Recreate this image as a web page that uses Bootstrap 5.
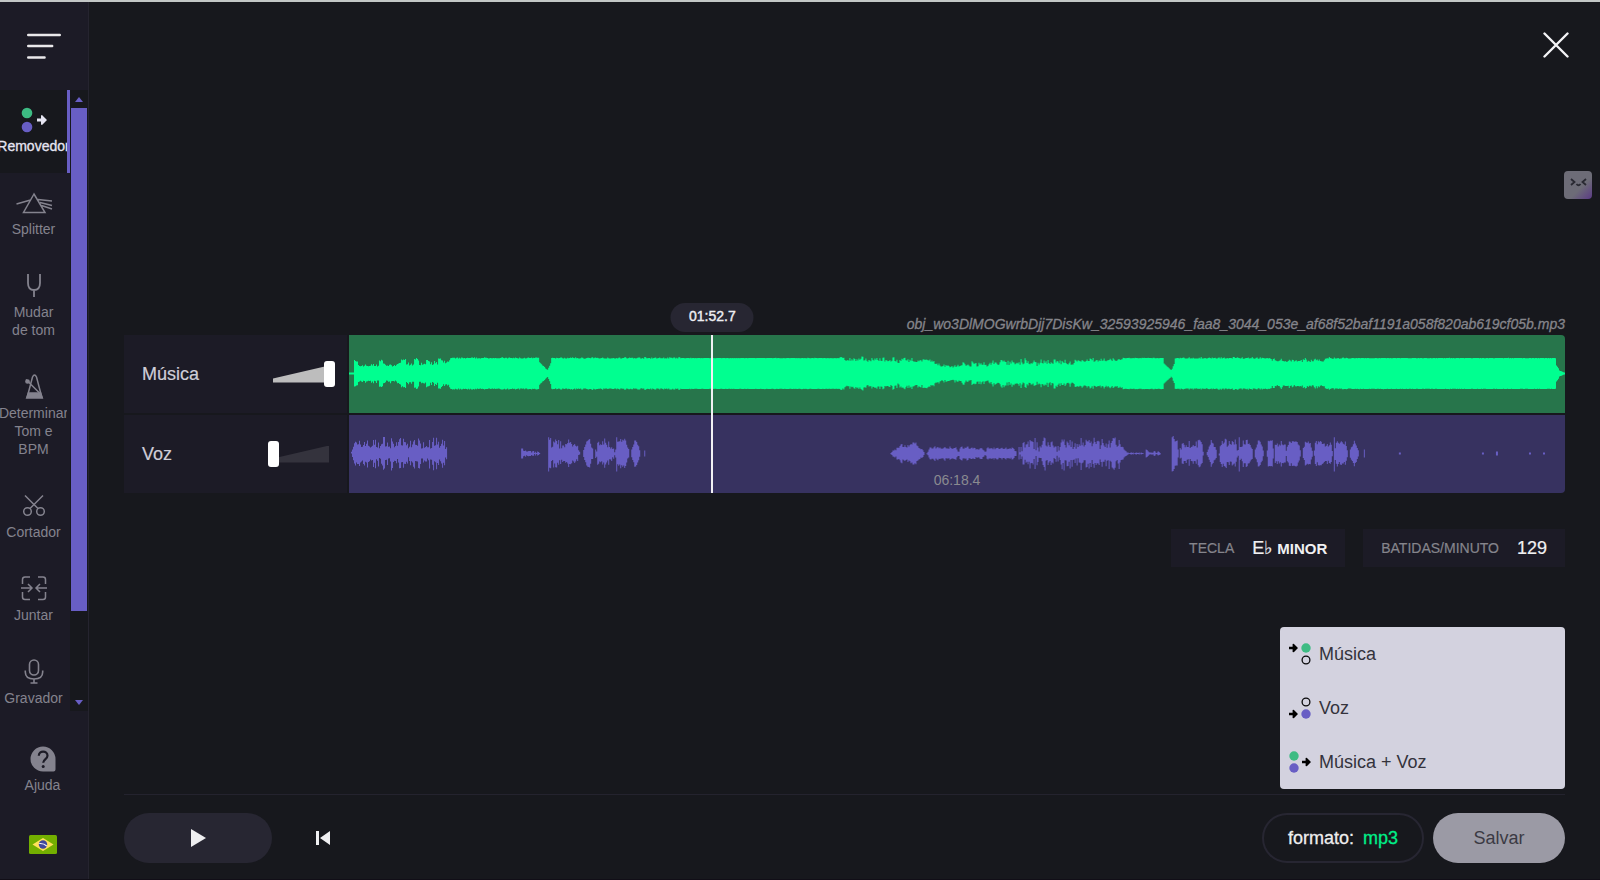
<!DOCTYPE html>
<html lang="pt-BR">
<head>
<meta charset="utf-8">
<meta name="viewport" content="width=device-width, initial-scale=1">
<title>Removedor</title>
<link href="https://cdn.jsdelivr.net/npm/bootstrap@5.3.0/dist/css/bootstrap.min.css" rel="stylesheet">
<style>
  :root { --page: #17181d; --panel: #1c1b26; --raised: #272632; --violet: #685ec4; --mint: #3dbb83; --muted: #84838e; }
  body { background: var(--page); color: #eeeef2; font-family: "Liberation Sans", Arial, sans-serif; font-size: 18px; line-height: 22px; border-top: 2px solid #c3c7c6; border-bottom: 1px solid #110e17; }
  a { text-decoration: none; }
  svg { display: block; }

  .app-shell { min-height: calc(100vh - 3px); }
  .sidebar { position: sticky; top: 0; width: 89px; height: calc(100vh - 3px); background: var(--panel); border-right: 1px solid #25242f; }
  .side-top { height: 88px; padding-left: 27px; }
  .side-list { min-height: 0; background: var(--page); }
  .side-items { width: 70px; background: var(--panel); overflow-x: hidden; overflow-y: auto; scrollbar-width: none; }
  .side-items::-webkit-scrollbar { display: none; }
  .side-item { color: var(--muted); font-size: 14px; line-height: 18px; padding: 17px 0 18px; gap: 4px; border-right: 3px solid transparent; overflow: hidden; text-align: center; }
  .side-item svg { height: 26px; }
  .side-item.active { background: var(--page); color: #e6e5f2; border-color: var(--violet); -webkit-text-stroke: .3px; }
  .side-item:hover, .side-help:hover { color: #e6e5f2; }
  .scroll-rail { padding: 0 1px; }
  .scroll-rail .arrow { height: 18px; }
  .scroll-thumb { height: 86%; background: var(--violet); }
  .side-bottom { height: 168px; padding-top: 35px; padding-right: 3px; padding-bottom: 25px; }
  .side-help { color: var(--muted); font-size: 14px; line-height: 18px; gap: 4px; }

  .workspace { min-width: 0; padding: 0 35px; }
  .top-row { height: 88px; padding-top: 30px; margin-right: -4px; }
  .mascot { right: 8px; top: 171px; width: 28px; height: 28px; border-radius: 4px; background: linear-gradient(135deg, #6d6c77 60%, #5b3a86); }
  .stage { padding-bottom: 14px; }

  .file-row { height: 32px; }
  .file-title { color: #85858b; font-size: 14px; line-height: 22px; font-style: italic; -webkit-text-stroke: .3px; }
  .lane-grid { display: grid; grid-template-columns: 223px minmax(0, 1fr); gap: 2px; }
  .lane-head { height: 78px; padding: 0 12px 0 18px; background: var(--panel); color: #cfced8; -webkit-text-stroke: .2px; }
  .lane-wave { height: 78px; }
  .lane-wave svg { width: 100%; height: 78px; }
  .lane-music { background: #27754b; border-top-right-radius: 4px; }
  .lane-voice { background: #373260; border-bottom-right-radius: 4px; }

  .volume { display: grid; width: 67px; }
  .volume::before { content: ""; grid-area: 1 / 1; align-self: center; width: 56px; height: 17px; margin-left: 5px; background: #bdbdbd; clip-path: polygon(0 76%, 100% 0, 100% 100%, 0 100%); }
  .volume.muted::before { background: #34333d; }
  .volume input { grid-area: 1 / 1; z-index: 1; width: 67px; height: 26px; margin: 0; background: none; -webkit-appearance: none; appearance: none; }
  .volume input::-webkit-slider-thumb { -webkit-appearance: none; width: 11px; height: 26px; border-radius: 3px; background: #fff; }
  .volume input::-moz-range-thumb { width: 11px; height: 26px; border: 0; border-radius: 3px; background: #fff; }

  .timeline { position: absolute; left: 225px; right: 0; top: 0; bottom: 0; pointer-events: none; }
  .playhead { position: absolute; top: 0; bottom: 0; width: 2px; background: #f1f1f4; }
  .time-pill { position: absolute; bottom: 100%; left: 50%; transform: translateX(-50%); margin-bottom: 3px; width: 83px; height: 29px; border-radius: 15px; background: var(--raised); font-size: 14px; line-height: 27px; text-align: center; -webkit-text-stroke: .4px; }
  .total-time { position: absolute; bottom: 4px; left: 50%; transform: translateX(-50%); color: #8a8a90; font-size: 14px; line-height: 18px; }

  .facts { gap: 18px; margin-top: 36px; }
  .fact { height: 38px; padding: 0 18px; gap: 18px; background: var(--panel); }
  .fact dt { color: #85858c; font-size: 14px; font-weight: 400; -webkit-text-stroke: .2px; }
  .fact dd { color: #f0f0f2; margin: 0; -webkit-text-stroke: .2px; }
  .fact .mode { font-size: 15px; font-weight: 700; -webkit-text-stroke: 0; }

  .player-bar { border-top: 1px solid #24232e; padding: 18px 0 16px; }
  .pill { height: 50px; border-radius: 25px; border: 2px solid transparent; padding: 0 24px; font-size: 18px; }
  .btn-play { width: 148px; background: var(--raised); }
  .btn-format { border-color: var(--raised); color: #eee; gap: 9px; margin-right: 9px; -webkit-text-stroke: .3px; }
  .btn-format span { color: #00ef88; }
  .btn-save, .btn-save:hover { width: 132px; background: #9b9aa5; color: #3b3a44; }
  .btn-prev { margin-left: 35px; width: 31px; height: 50px; }
  .export-menu { position: absolute; right: 0; bottom: 100%; margin-bottom: 6px; width: 285px; border-radius: 4px; background: #d3d2df; }
  .export-menu button { height: 54px; padding: 0 9px; gap: 8px; color: #34333c; border: 0; border-radius: 0; font-size: 18px; }
</style>
</head>
<body>
<svg class="d-none">
  <symbol id="arrow" viewBox="0 0 10 10"><path d="M0 3.600h4V0.500L5 0 10 5 5 10 4 9.500V6.400H0z" fill="currentColor"/></symbol>
</svg>
<div class="app-shell d-flex">
  <aside class="sidebar d-flex flex-column flex-shrink-0">
    <div class="side-top d-flex flex-shrink-0">
      <button class="btn border-0 p-0" type="button" aria-label="Menu">
        <svg width="34" height="28" viewBox="0 0 34 28" stroke="#e9e8ea" stroke-width="2.400" stroke-linecap="round"><path d="M1.200 3h31.600M1.200 14h24M1.200 25.500h16.400"/></svg>
      </button>
    </div>
    <div class="side-list d-flex flex-grow-1">
      <nav class="side-items flex-shrink-0">
        <a href="#" class="side-item active d-flex flex-column align-items-center">
          <svg width="26" viewBox="0 0 26 26"><circle cx="6" cy="6" r="5.300" fill="#3dbb83"/><circle cx="6" cy="20" r="5.300" fill="#685ec4"/><use href="#arrow" x="16" y="8" width="10" height="10"/></svg>
          <span>Removedor</span></a>
        <a href="#" class="side-item d-flex flex-column align-items-center">
          <svg width="38" viewBox="0 0 38 26" fill="none" stroke="currentColor" stroke-width="1.500"><path d="M19 4 8.500 22.500h21.500zM1.500 14l14-4M23 9.500l14 1.500M25 12.500l12 3M26.500 15.500 37 19"/></svg>
          <span>Splitter</span></a>
        <a href="#" class="side-item d-flex flex-column align-items-center">
          <svg width="16" viewBox="0 0 16 26" fill="none" stroke="currentColor" stroke-width="1.800"><path d="M2 1v9c0 4 2 7 6 7s6-3 6-7V1M8 17v7"/></svg>
          <span>Mudar<br>de tom</span></a>
        <a href="#" class="side-item d-flex flex-column align-items-center">
          <svg width="20" viewBox="0 0 20 26" fill="none" stroke="currentColor" stroke-width="1.500"><path d="M3 24 8.500 3Q10.500-1 12.500 3L18 24M2 5.500 15.500 19"/><circle cx="3.500" cy="7.500" r="1.600" fill="currentColor"/><path d="M4.400 19h12.200l1.700 5H2.700z" fill="currentColor"/></svg>
          <span>Determinar<br>Tom e<br>BPM</span></a>
        <a href="#" class="side-item d-flex flex-column align-items-center">
          <svg width="24" viewBox="0 0 24 26" fill="none" stroke="currentColor" stroke-width="1.500"><circle cx="5.500" cy="18.500" r="3.800"/><circle cx="18.500" cy="18.500" r="3.800"/><path d="M3 2.500l13 13M21 2.500l-13 13"/></svg>
          <span>Cortador</span></a>
        <a href="#" class="side-item d-flex flex-column align-items-center">
          <svg width="26" viewBox="0 0 26 26" fill="none" stroke="currentColor" stroke-width="1.500"><path d="M1.500 8V3.500Q1.500 1 4 1h5M17 1h5q2.500 0 2.500 2.500V8M24.500 16v5q0 2.500-2.500 2.500h-5M9 23.500H4Q1.500 23.500 1.500 21v-5M0 12h11M7 8l4 4-4 4M26 12H15M19 8l-4 4 4 4"/></svg>
          <span>Juntar</span></a>
        <a href="#" class="side-item d-flex flex-column align-items-center">
          <svg width="20" viewBox="0 0 20 26" fill="none" stroke="currentColor" stroke-width="1.600"><rect x="5.500" y="1" width="9" height="15" rx="4.500"/><path d="M1.300 11.500v1.500q0 7 8.700 7t8.700-7v-1.500M10 20v4M6.500 24h7"/></svg>
          <span>Gravador</span></a>
      </nav>
      <div class="scroll-rail d-flex flex-column flex-grow-1" aria-hidden="true">
        <div class="arrow d-flex align-items-center justify-content-center"><svg width="8" height="5"><path d="M0 5 4 0l4 5z" fill="#685ec4"/></svg></div>
        <div class="flex-grow-1"><div class="scroll-thumb"></div></div>
        <div class="arrow d-flex align-items-center justify-content-center"><svg width="8" height="5"><path d="M0 0 4 5l4-5z" fill="#685ec4"/></svg></div>
      </div>
    </div>
    <div class="side-bottom d-flex flex-column align-items-center flex-shrink-0">
      <a href="#" class="side-help d-flex flex-column align-items-center">
        <svg width="26" height="26" viewBox="0 0 26 26"><path d="M13 .500a12.500 12.500 0 0 1 12.500 12.500v10.500q0 2-2 2H13a12.500 12.500 0 0 1 0-25z" fill="currentColor"/><path d="M8.800 9.800c0-5.500 8.700-5.500 8.700 0 0 3.200-4.300 3.400-4.300 7" fill="none" stroke="#1c1b26" stroke-width="2.200"/><circle cx="13.200" cy="20.400" r="1.500" fill="#1c1b26"/></svg>
        <span>Ajuda</span></a>
      <button class="btn border-0 p-0 mt-auto" type="button" aria-label="Idioma">
        <svg width="28" height="19" viewBox="0 0 28 19"><rect width="28" height="19" rx="1.500" fill="#73af00"/><path d="M3.500 9.500 14 3l10.500 6.500L14 16z" fill="#ffe15a"/><circle cx="14" cy="9.500" r="4.200" fill="#41479b"/><path d="M10.200 8.500q4.500-.5 7.500 2.500" fill="none" stroke="#f5f5f5" stroke-width="1.100"/></svg>
      </button>
    </div>
  </aside>

  <main class="workspace d-flex flex-column flex-grow-1">
    <div class="top-row d-flex justify-content-end align-items-start">
      <button class="btn border-0 p-0" type="button" aria-label="Fechar">
        <svg width="26" height="26" viewBox="0 0 26 26" stroke="#f4f4f6" stroke-width="2.400" stroke-linecap="round"><path d="M1.500 1.500l23 23M24.500 1.500l-23 23"/></svg>
      </button>
    </div>
    <button class="mascot position-absolute border-0 p-0" type="button" aria-label="Assistente">
      <svg width="28" height="28" viewBox="0 0 28 28" fill="none" stroke="#292932" stroke-width="1.800"><path d="M7 8l3.500 3L7 14M22 8l-3.500 3 3.500 3M12.500 13q2 2.500 4 0"/></svg>
    </button>

    <section class="stage d-flex flex-column flex-grow-1 justify-content-center">
      <div class="file-row d-flex justify-content-end align-items-end"><div class="file-title">obj_wo3DlMOGwrbDjj7DisKw_32593925946_faa8_3044_053e_af68f52baf1191a058f820ab619cf05b.mp3</div></div>
      <div class="position-relative">
        <div class="lane-grid">
          <div class="lane-head d-flex align-items-center justify-content-between">
            <label for="volMusic">Música</label>
            <div class="volume"><input type="range" id="volMusic" min="0" max="100" value="100"></div>
          </div>
          <div class="lane-wave lane-music"><svg viewBox="0 0 1215 78" preserveAspectRatio="none"><path id="waveMusic" fill="#00ff90"/></svg></div>
          <div class="lane-head d-flex align-items-center justify-content-between">
            <label for="volVoice">Voz</label>
            <div class="volume muted"><input type="range" id="volVoice" min="0" max="100" value="0"></div>
          </div>
          <div class="lane-wave lane-voice"><svg viewBox="0 0 1215 78" preserveAspectRatio="none"><path id="waveVoice" fill="#685ec4"/></svg></div>
        </div>
        <div class="timeline">
          <div class="playhead" style="left: 29.8%"><div class="time-pill">01:52.7</div></div>
          <div class="total-time">06:18.4</div>
        </div>
      </div>
      <dl class="facts d-flex justify-content-end mb-0">
        <div class="fact d-flex align-items-center"><dt>TECLA</dt><dd>E♭ <span class="mode">MINOR</span></dd></div>
        <div class="fact d-flex align-items-center"><dt>BATIDAS/MINUTO</dt><dd>129</dd></div>
      </dl>
    </section>

    <footer class="player-bar d-flex align-items-center position-relative">
      <button class="btn pill btn-play d-flex align-items-center justify-content-center" type="button" aria-label="Tocar"><svg width="16" height="18"><path d="M1 0l15 9-15 9z" fill="#eeeef0"/></svg></button>
      <button class="btn border-0 p-0 btn-prev d-flex align-items-center justify-content-center" type="button" aria-label="Início"><svg width="14" height="14"><path d="M0 0h3v14H0zM14 0v14L4 7z" fill="#f0f0f2"/></svg></button>
      <button class="btn pill btn-format d-flex align-items-center ms-auto" type="button">formato: <span>mp3</span></button>
      <button class="btn pill btn-save" type="button">Salvar</button>
      <div class="export-menu d-flex flex-column" role="menu">
        <button class="btn d-flex align-items-center" type="button" role="menuitem"><svg width="22" height="22" viewBox="0 0 22 22"><use href="#arrow" y="0.500" width="9" height="9" color="#000"/><circle cx="17" cy="5" r="4.700" fill="#3dbb83"/><circle cx="17" cy="17" r="3.900" fill="none" stroke="#08080a" stroke-width="1.300"/></svg>Música</button>
        <button class="btn d-flex align-items-center" type="button" role="menuitem"><svg width="22" height="22" viewBox="0 0 22 22"><use href="#arrow" y="12.500" width="9" height="9" color="#000"/><circle cx="17" cy="5" r="3.900" fill="none" stroke="#08080a" stroke-width="1.300"/><circle cx="17" cy="17" r="4.700" fill="#685ec4"/></svg>Voz</button>
        <button class="btn d-flex align-items-center" type="button" role="menuitem"><svg width="22" height="22" viewBox="0 0 22 22"><circle cx="5" cy="5" r="4.700" fill="#3dbb83"/><circle cx="5" cy="17" r="4.700" fill="#685ec4"/><use href="#arrow" x="13" y="6.500" width="9" height="9" color="#000"/></svg>Música + Voz</button>
      </div>
    </footer>
  </main>
</div>
<script src="https://cdn.jsdelivr.net/npm/bootstrap@5.3.0/dist/js/bootstrap.bundle.min.js"></script>
<script>
  // Each entry: [from, to, level at start, level at end, noise, taper length at both ends]
  const music = [
    [0,5,1,1,0],[5,9,13,10,1],[9,30,8,8,1.5],[30,36,13,10,1.5],[36,50,8,8,1.5],[50,57,11,14,2],[57,65,10,9,2],[65,70,15,12,1.5],[70,77,10,10,2],
    [77,81,14,13,1.5],[81,89,9,10,2],[89,93,15,13,1],[93,101,11,12,2],[101,190,15.4,15.4,.6],[190,199,11,2.500,.3],[199,202,6,13,1],
    [202,332,15.4,15.4,.7],[332,490,15.4,15.4,.2],[490,535,14,13.500,2],[535,560,13,12,2.500],[560,584,13,12,2],[584,592,11,7,1.500],[592,612,7,8,2],
    [612,650,8,10,2.500],[650,725,11,11,3],[725,773,13,13.500,1.700],[773,814,15.4,15.4,.3],[814,822,10,2.500,.3],[822,825,5,12,1],
    [825,921,15.4,15.4,.8],[921,975,13,13,1.800],[975,1005,15.3,15.3,.8],[1005,1206,15.4,15.4,.2],[1206,1209,8,4,0],[1209,1215,3,.5,0]
  ];
  const voice = [
    [2,98,9,9,5,3],[172,174,5,5,0],[174,191,2.500,.5,1],[199,202,16,14,2],[202,231,9,9,4,2],[234,244,12,12,2,3],[246,265,9,9,4,2],[265,280,11,12,3,4],
    [282,291,12,12,1,3],[295,296,3,3,0],[541,553,1,9,1.500],[553,564,7,8,2],[564,567,11,9,1],[567,575,8,1,1],[577,610,5,6,1.500,3],[610,635,6,4,1.300],[635,667,5,5,1,3],
    [669,680,4,9,4],[680,770,8,9,6],[770,778,8,1,1],[778,794,.6,.6,.6],[796,798,4,3,0],[798,811,1.200,1.200,1],[822,829,16,11,2,1],[830,854,9,9,4,2],[857,867,12,10,2,4],
    [869,889,10,10,4,2],[889,903,10,11,3,4],[905,914,12,12,1,3],[917,924,12,12,1,1],[925,936,8,10,3],[936,951,11,11,2,3],[953,963,13,11,2,3],[964,983,11,9,3,1],
    [984,998,10,11,3,3],[1000,1009,12,12,1,4],[1014,1015,4,4,0],[1049,1051,1,1,0],[1132,1134,1,1,0],[1146,1148,2,2,0],[1179,1181,1,1,0],[1193,1195,1,1,0]
  ];
  const spikes = { 42: 17, 65: 15, 80: 15, 199: 18, 207: 14, 267: 18, 680: 15, 695: 17, 720: 15, 739: 15, 762: 14, 822: 18, 889: 18, 984: 18 };

  function draw(id, segments, middle, floor, peaks) {
    let seed = 7;
    const rnd = () => (seed = (seed * 16807) % 2147483647) / 2147483647;
    const up = [], down = [];
    for (let x = 0; x < 1215; x++) {
      const s = segments.find(g => x >= g[0] && x < g[1]);
      let a = floor, b = floor;
      if (s) {
        const t = (x - s[0]) / Math.max(1, s[1] - s[0]);
        let level = s[2] + (s[3] - s[2]) * t;
        if (s[5]) level *= Math.min(1, .3 + .7 * Math.min(x - s[0], s[1] - 1 - x) / s[5]);
        if (s[4] >= 2) level += Math.sin(x * .5) * Math.sin(x * .13) * s[4] * .4;
        const n = rnd(), shared = (n * n * 2 - .6) * s[4] * .9;
        a = Math.max(floor, level + shared + (rnd() - .5) * s[4] * .6);
        b = Math.max(floor, level + shared + (rnd() - .5) * s[4] * .6);
      }
      if (peaks[x]) { a = peaks[x] * .9; b = peaks[x]; }
      up.push(`${x} ${(middle - a).toFixed(1)}H${x + 1}`);
      down.unshift(`${x + 1} ${(middle + b).toFixed(1)}H${x}`);
    }
    document.getElementById(id).setAttribute('d', 'M' + up.join('L') + 'L' + down.join('L') + 'Z');
  }
  draw('waveMusic', music, 38.5, .3, {});
  draw('waveVoice', voice, 38.5, .1, spikes);
</script>
</body>
</html>
